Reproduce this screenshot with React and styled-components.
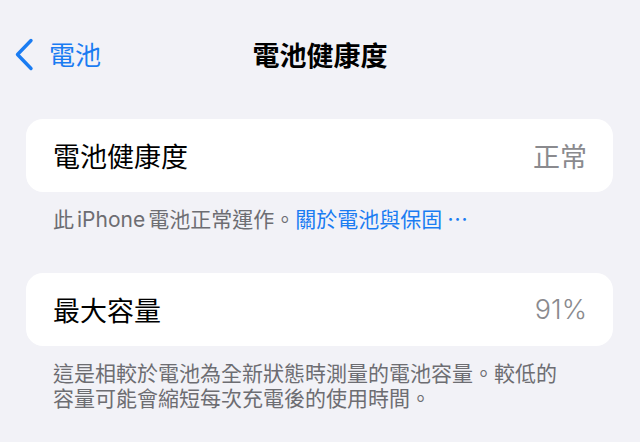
import React from 'react';
import styled, { createGlobalStyle } from 'styled-components';

const GlobalStyle = createGlobalStyle`
  html, body { margin: 0; padding: 0; background: #f2f2f7; }
  body {
    font-family: "Noto Sans CJK TC", "Noto Sans", "Liberation Sans", sans-serif;
    -webkit-font-smoothing: antialiased;
  }
`;

const Page = styled.div`
  width: 640px;
  height: 442px;
  overflow: hidden;
  background: #f2f2f7;
`;

const NavBar = styled.header`
  height: 108px;
  display: grid;
  grid-template-columns: 1fr auto 1fr;
  align-items: center;
  padding: 0 14px;
  box-sizing: border-box;
`;

const BackButton = styled.button`
  justify-self: start;
  display: flex;
  align-items: center;
  gap: 15px;
  border: none;
  background: none;
  padding: 0;
  color: #1a7cf2;
  font-family: inherit;
  font-size: 26px;
  line-height: 1;
  cursor: pointer;
`;

const Title = styled.h1`
  margin: 0;
  font-size: 27px;
  font-weight: 700;
  color: #000;
`;

const Section = styled.section`
  margin: ${p => p.$top}px 27px 0 26px;
`;

const Card = styled.div`
  height: 73px;
  background: #fff;
  border-radius: 17px;
  display: flex;
  align-items: center;
  justify-content: space-between;
  padding: 0 26px 0 27px;
  box-sizing: border-box;
`;

const Label = styled.span`
  font-size: 27px;
  color: #000;
`;

const Value = styled.span`
  font-size: 27px;
  color: #8a8a8e;
  font-family: ${p => (p.$latin ? '"Inter", "Liberation Sans", sans-serif' : 'inherit')};
  font-weight: ${p => (p.$latin ? 300 : 400)};
`;

const Footer = styled.p`
  margin: 14px 0 0;
  padding: 0 50px 0 27px;
  font-size: 21px;
  line-height: 25px;
  color: #6d6d72;
`;

const Latin = styled.span`
  font-family: "Inter", "Liberation Sans", sans-serif;
  margin: 0 3px;
`;

const Link = styled.a`
  color: #1a7cf2;
  text-decoration: none;
`;

const Chevron = () => (
  <svg width="20" height="33" viewBox="0 0 20 33" fill="none">
    <path d="M17 2.5 L3.5 16.5 L17 30.5" stroke="#1a7cf2" strokeWidth="3.4" strokeLinecap="round" strokeLinejoin="round" />
  </svg>
);

const App = () => (
  <Page>
    <GlobalStyle />
    <NavBar>
      <BackButton>
        <Chevron />
        電池
      </BackButton>
      <Title>電池健康度</Title>
      <div />
    </NavBar>

    <Section $top={11}>
      <Card>
        <Label>電池健康度</Label>
        <Value>正常</Value>
      </Card>
      <Footer>
        此<Latin>iPhone</Latin>電池正常運作。<Link>關於電池與保固 ⋯</Link>
      </Footer>
    </Section>

    <Section $top={41}>
      <Card>
        <Label>最大容量</Label>
        <Value $latin>91%</Value>
      </Card>
      <Footer>
        這是相較於電池為全新狀態時測量的電池容量。較低的容量可能會縮短每次充電後的使用時間。
      </Footer>
    </Section>
  </Page>
);

export default App;
